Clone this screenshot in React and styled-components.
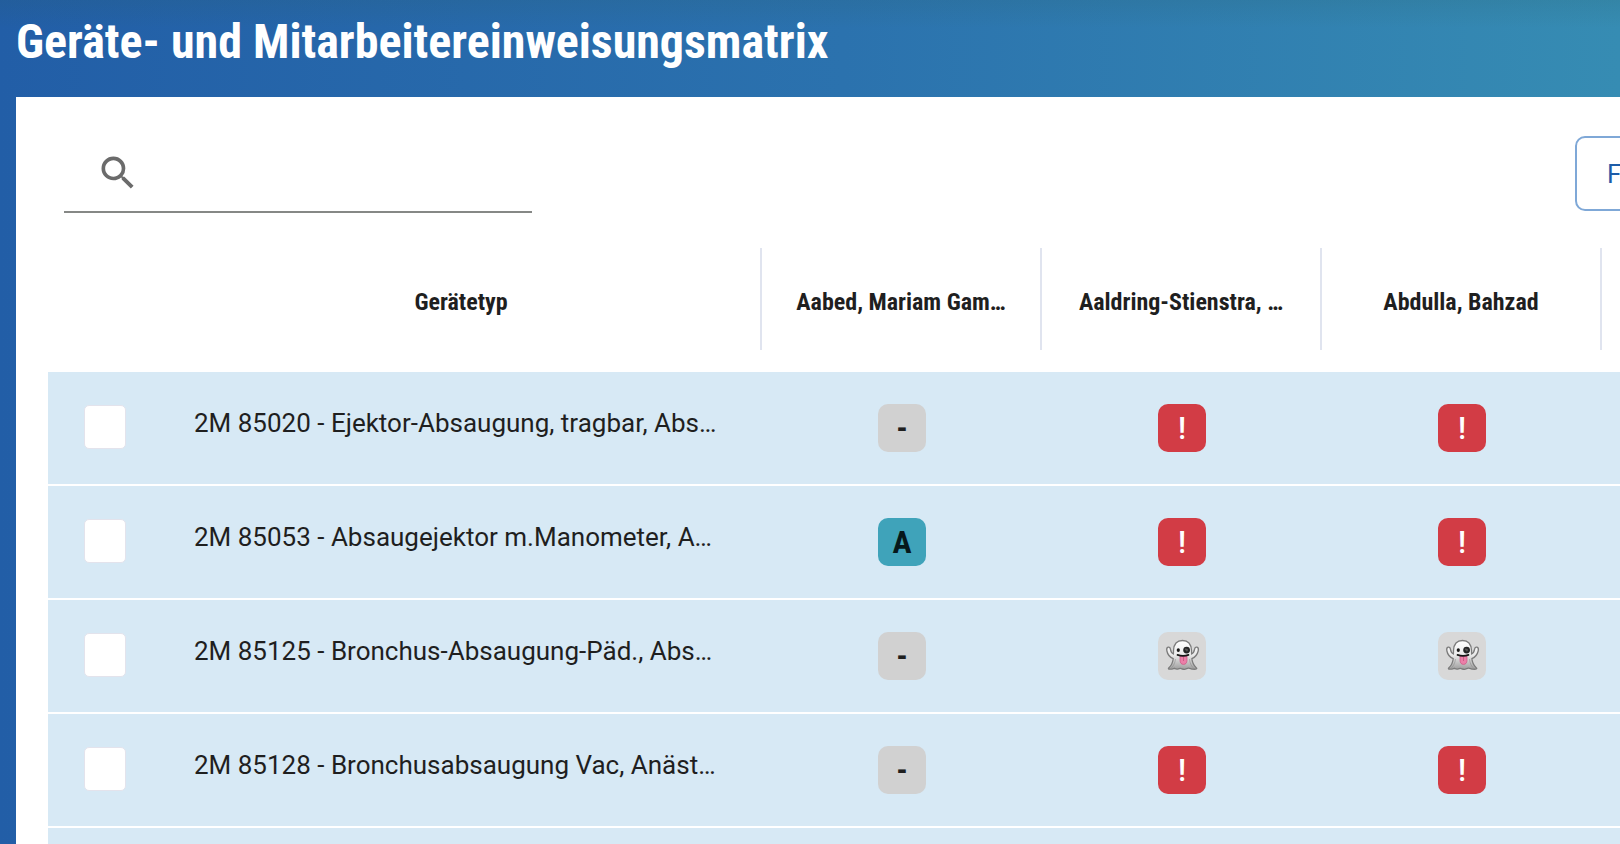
import React, { useState } from 'react';
import styled, { createGlobalStyle } from 'styled-components';

const GlobalStyle = createGlobalStyle`
  * {
    box-sizing: border-box;
  }

  body {
    margin: 0;
    overflow: hidden;
    font-family: Roboto, 'Liberation Sans', sans-serif;
    color: #1f1f1f;
  }
`;

const Page = styled.div`
  display: flex;
  flex-direction: column;
  height: 100vh;
  overflow: hidden;
  background:
    linear-gradient(to bottom, rgba(40, 90, 90, 0.14), rgba(40, 90, 90, 0) 28px),
    linear-gradient(to right, #225ea7, #2b72ae 52%, #368cb3);
`;

const Header = styled.header`
  padding: 12px 16px 25px;
`;

const Title = styled.h1`
  margin: 0;
  font-family: 'Roboto Condensed', Roboto, sans-serif;
  font-size: 48px;
  font-weight: 700;
  line-height: 60px;
  color: #fff;
  white-space: nowrap;
`;

const Panel = styled.main`
  flex: 1;
  min-height: 0;
  margin-left: 16px;
  padding: 39px 0 0 32px;
  background: #fff;
  overflow: hidden;
`;

const Toolbar = styled.div`
  display: flex;
  justify-content: space-between;
  align-items: flex-start;
  margin: 0 -96px 0 16px;
`;

const SearchField = styled.label`
  display: flex;
  align-items: center;
  gap: 16px;
  width: 468px;
  height: 77px;
  padding: 0 0 2px 32px;
  border-bottom: 2px solid #868886;
`;

const SearchInput = styled.input`
  flex: 1;
  min-width: 0;
  border: none;
  outline: none;
  background: transparent;
  font: inherit;
  font-size: 26px;
`;

const FilterButton = styled.button`
  width: 141px;
  height: 75px;
  padding: 0 30px;
  border: 2px solid #7fa8d7;
  border-radius: 10px;
  background: #fff;
  color: #1d5ca8;
  font-family: inherit;
  font-size: 26px;
  text-align: left;
  cursor: pointer;
`;

const Matrix = styled.table`
  width: 100%;
  margin-top: 35px;
  table-layout: fixed;
  border-collapse: separate;
  border-spacing: 0;
`;

const Column = styled.col`
  width: ${({ $width }) => $width}px;
`;

const HeadCell = styled.th`
  height: 124px;
  padding: 0;
  vertical-align: top;
`;

const HeadLabel = styled.div`
  height: 102px;
  padding-top: 6px;
  border-right: 2px solid #e0e4ef;
  font-family: 'Roboto Condensed', Roboto, sans-serif;
  font-size: 24px;
  font-weight: 700;
  line-height: 96px;
  text-align: center;
  white-space: nowrap;
`;

const Cell = styled.td`
  height: 114px;
  padding: 0;
  border-bottom: 2px solid #fff;
  background: #d7e9f5;
  text-align: center;
`;

const TypeCell = styled(Cell)`
  padding: 0 0 10px 32px;
  font-size: 26px;
  text-align: left;
  white-space: nowrap;
`;

const Checkbox = styled.input`
  appearance: none;
  display: block;
  width: 42px;
  height: 44px;
  margin: 0 auto 2px;
  border: 1px solid #e3e3ec;
  border-radius: 5px;
  background: #fff;

  &:checked {
    background: #225ea7;
  }
`;

const badgeStyles = {
  '-': { background: '#d1d1d1', color: '#1f1f1f', weight: 700 },
  A: { background: '#3fa3ba', color: '#06181b', weight: 700 },
  '!': { background: '#d23c45', color: '#fff', weight: 500 },
  ghost: { background: '#d8d8d8', color: '#1f1f1f', weight: 700 },
};

const Badge = styled.span`
  display: flex;
  align-items: center;
  justify-content: center;
  width: 48px;
  height: 48px;
  margin: 0 auto;
  border-radius: 10px;
  background: ${({ $status }) => badgeStyles[$status].background};
  color: ${({ $status }) => badgeStyles[$status].color};
  font-family: 'Roboto Condensed', Roboto, sans-serif;
  font-size: 32px;
  font-weight: ${({ $status }) => badgeStyles[$status].weight};
`;

const SearchIcon = () => (
  <svg width="44" height="44" viewBox="0 0 24 24" fill="#6b6b6b" aria-hidden="true">
    <path d="M15.5 14h-.79l-.28-.27A6.471 6.471 0 0 0 16 9.5 6.5 6.5 0 1 0 9.5 16c1.61 0 3.09-.59 4.23-1.57l.27.28v.79l5 4.99L20.49 19l-4.99-5zm-6 0C7.01 14 5 11.99 5 9.5S7.01 5 9.5 5 14 7.01 14 9.5 11.99 14 9.5 14z" />
  </svg>
);

const GhostIcon = () => (
  <svg width="48" height="48" viewBox="0 0 48 48" role="img" aria-label="Geist">
    <defs>
      <linearGradient id="ghostBody" x1="0" y1="0" x2="0" y2="1">
        <stop offset="0" stopColor="#ffffff" />
        <stop offset="0.5" stopColor="#eaeaea" />
        <stop offset="1" stopColor="#9f9f9f" />
      </linearGradient>
    </defs>
    <path
      d="M24.5 8.5C18.8 8.5 15.8 12.6 15.5 18.5L15.4 22C13.6 21.3 12.8 19.5 12.4 17.2C12.1 15.4 11.4 14.9 10.2 15.2C8.6 15.6 8.4 17 8.9 19C9.6 22.4 11.9 25.2 15.2 26.7C14.9 30.2 13.5 33.3 10.7 36C10.1 36.7 10.6 37.2 11.4 37.2C13.4 37.2 14.8 36.9 16.3 36.3C17.5 37 18.5 37.4 19.8 37.1C21 36.9 21.7 36.3 22.6 36.4C24 36.7 24.7 37.4 26.4 37.3C28.1 37.2 28.9 36.3 30.4 36.1C32.1 36 33 37.1 35 37.2C36.5 37.3 37.5 37.3 38.3 37C39.1 36.7 38.7 36.2 38.1 35.6C35.4 32.9 34.2 30.1 33.9 26.7C37 25.2 39.4 22.4 40.2 19C40.7 17 40.4 15.6 38.9 15.2C37.7 14.9 36.9 15.4 36.6 17.2C36.2 19.5 35.4 21.3 33.6 22L33.5 18.5C33.2 12.6 30.2 8.5 24.5 8.5Z"
      fill="url(#ghostBody)"
      stroke="#7c7c7c"
      strokeWidth="1.3"
    />
    <path d="M17.5 27C17 31 15.5 33.8 13.5 35.8M31.5 27C31.8 31 33.2 33.8 35.2 35.8" stroke="#858585" strokeOpacity="0.5" fill="none" />
    <path d="M22 24H29V28.5C29 31 27.5 32.4 25.5 32.4S22 31 22 28.5Z" fill="#eb7fa8" stroke="#cb5582" strokeWidth="0.7" />
    <path d="M25.5 25V29" stroke="#c9527e" strokeWidth="0.8" />
    <path d="M19.5 22.9Q25 24.7 30.5 22.9" stroke="#171717" strokeWidth="1.7" strokeLinecap="round" fill="none" />
    <ellipse cx="20.3" cy="18.1" rx="1.6" ry="1.9" fill="#171717" />
    <circle cx="28.6" cy="18.1" r="3.4" fill="#242424" />
    <circle cx="28.8" cy="18.1" r="1.3" fill="#505050" />
    <circle cx="27.8" cy="17" r="0.6" fill="#858585" />
  </svg>
);

const employees = ['Aabed, Mariam Gam…', 'Aaldring-Stienstra, …', 'Abdulla, Bahzad'];

const devices = [
  { name: '2M 85020 - Ejektor-Absaugung, tragbar, Abs…', statuses: ['-', '!', '!'] },
  { name: '2M 85053 - Absaugejektor m.Manometer, A…', statuses: ['A', '!', '!'] },
  { name: '2M 85125 - Bronchus-Absaugung-Päd., Abs…', statuses: ['-', 'ghost', 'ghost'] },
  { name: '2M 85128 - Bronchusabsaugung Vac, Anäst…', statuses: ['-', '!', '!'] },
];

const DeviceRow = ({ device }) => (
  <tr>
    <Cell>
      <Checkbox type="checkbox" aria-label={device.name} />
    </Cell>
    <TypeCell>{device.name}</TypeCell>
    {device.statuses.map((status, i) => (
      <Cell key={employees[i]}>
        <Badge $status={status}>{status === 'ghost' ? <GhostIcon /> : status}</Badge>
      </Cell>
    ))}
    <Cell />
  </tr>
);

const App = () => {
  const [query, setQuery] = useState('');
  const visible = devices.filter(({ name }) => name.toLowerCase().includes(query.toLowerCase()));

  return (
    <Page>
      <GlobalStyle />
      <Header>
        <Title>Geräte- und Mitarbeitereinweisungsmatrix</Title>
      </Header>
      <Panel>
        <Toolbar>
          <SearchField>
            <SearchIcon />
            <SearchInput
              type="text"
              aria-label="Suche"
              value={query}
              onChange={(e) => setQuery(e.target.value)}
            />
          </SearchField>
          <FilterButton type="button">Filter</FilterButton>
        </Toolbar>
        <Matrix>
          <colgroup>
            <Column $width={114} />
            <Column $width={600} />
            {employees.map((name) => <Column key={name} $width={280} />)}
            <col />
          </colgroup>
          <thead>
            <tr>
              <HeadCell />
              <HeadCell scope="col"><HeadLabel>Gerätetyp</HeadLabel></HeadCell>
              {employees.map((name) => (
                <HeadCell key={name} scope="col"><HeadLabel>{name}</HeadLabel></HeadCell>
              ))}
              <HeadCell />
            </tr>
          </thead>
          <tbody>
            {visible.map((device) => <DeviceRow key={device.name} device={device} />)}
            <tr>
              <Cell colSpan={employees.length + 3} />
            </tr>
          </tbody>
        </Matrix>
      </Panel>
    </Page>
  );
};

export default App;
